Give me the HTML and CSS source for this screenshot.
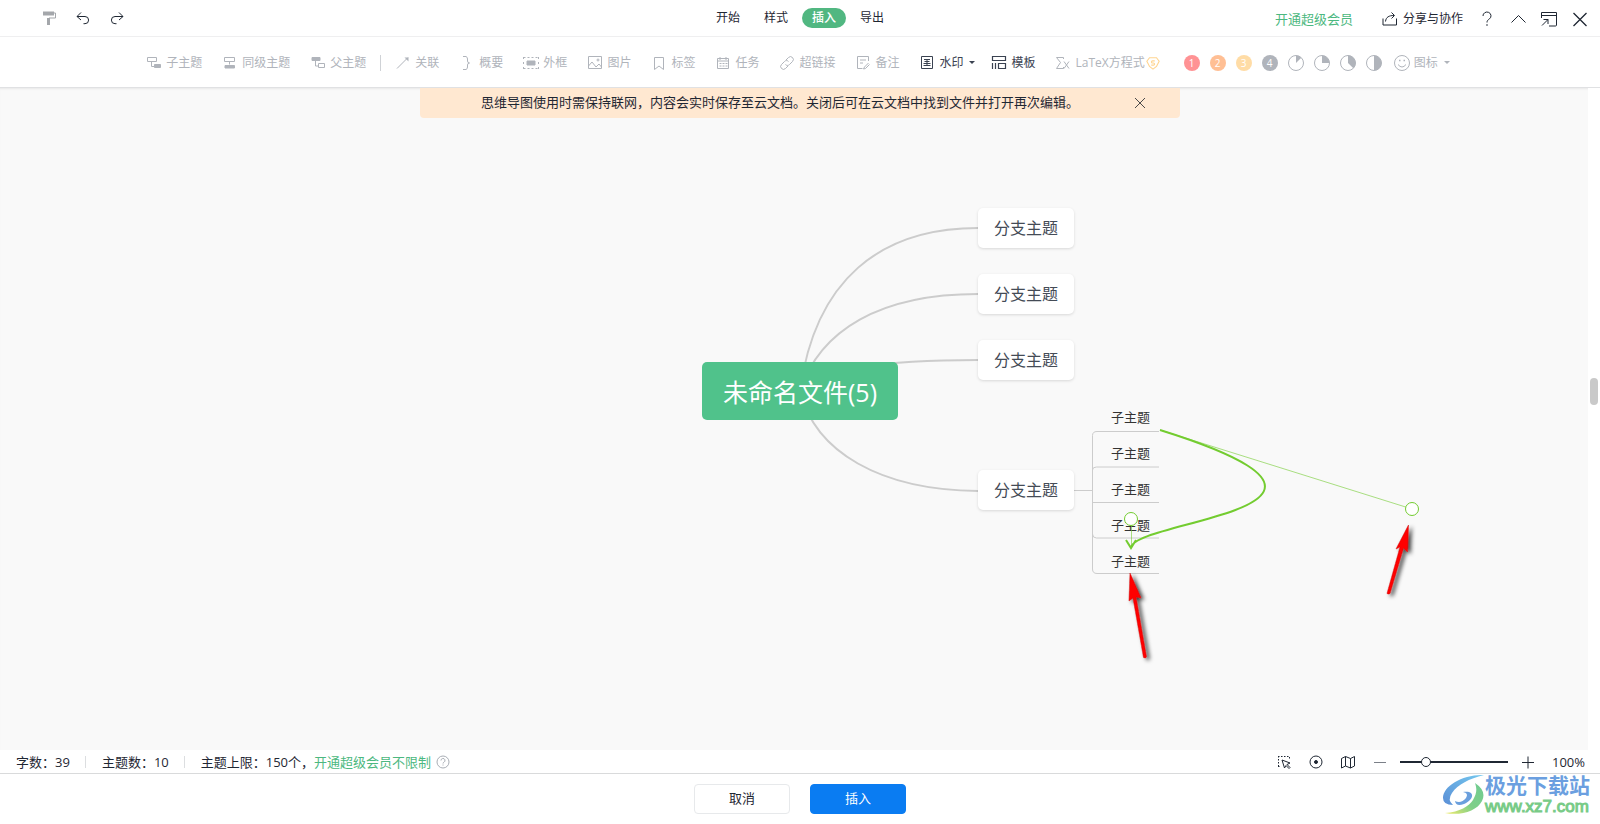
FILE: index.html
```html
<!DOCTYPE html>
<html lang="zh-CN">
<head>
<meta charset="utf-8">
<meta name="viewport" content="width=device-width, initial-scale=1">
<title>思维导图</title>
<link rel="stylesheet" href="styles.css">
</head>
<body>
<header class="header">
  <div class="history">
    <button class="icon-btn" aria-label="格式刷"><svg class="icon" viewBox="0 0 16 16"><path d="M2 1.500h11v4h-11z" fill="#a4a7ab"/><path d="M13 3h1.500v5H8v7" fill="none" stroke="#a4a7ab"/><path d="M6 8h3v7H6z" fill="#a4a7ab"/></svg></button>
    <button class="icon-btn" aria-label="撤销"><svg class="icon line" viewBox="0 0 16 16"><path d="M6 2.500 2 6.500l4 3.500M2 6.500h8a3.600 3.600 0 0 1 0 7.200H8.500"/></svg></button>
    <button class="icon-btn" aria-label="重做"><svg class="icon line" viewBox="0 0 16 16"><path d="m10 2.500 4 4L10 10M14 6.500H6a3.600 3.600 0 0 0 0 7.200h1.500"/></svg></button>
  </div>
  <nav class="tabs">
    <button class="tab">开始</button>
    <button class="tab">样式</button>
    <button class="tab active">插入</button>
    <button class="tab">导出</button>
  </nav>
  <div class="account">
    <a class="vip" href="#">开通超级会员</a>
    <button class="share"><svg class="icon line" viewBox="0 0 16 16"><path d="M1 7.500V14h13.500V7.500M3.500 10.500C4 6 7 4.500 12 4.500M9.500 1.500l3 3-3 3"/></svg>分享与协作</button>
    <div class="window-tools">
      <button class="icon-btn" aria-label="帮助"><svg class="icon line" viewBox="0 0 16 16"><path d="M4 5a4 3.800 0 1 1 6.500 2.800C9 9 8 9.500 8 11.500"/><path d="M7.400 14h1.200" stroke-width="1.500"/></svg></button>
      <button class="icon-btn" aria-label="收起"><svg class="icon line" viewBox="0 0 16 16"><path d="m1.500 11.500 7-7 7 7"/></svg></button>
      <button class="icon-btn" aria-label="还原窗口"><svg class="icon line" viewBox="0 0 16 16"><path d="M.5 7V1.500h15V14a1 1 0 0 1-1 1H8M.5 4.500h15M1 14.500l6-6M2.500 8.500H7V13"/></svg></button>
      <button class="icon-btn" aria-label="关闭"><svg class="icon line" viewBox="0 0 16 16"><path d="m1.500 2 13 13M14.500 2l-13 13" stroke-width="1.300"/></svg></button>
    </div>
  </div>
</header>

<div class="toolbar" role="toolbar">
  <button class="tool"><svg class="icon line" viewBox="0 0 16 16"><path d="M1.500 2.500h9v4h-9zM5.500 6.500v5H9"/><path d="M8.500 9.500h6v3h-6z" fill="currentColor"/></svg>子主题</button>
  <button class="tool"><svg class="icon line" viewBox="0 0 16 16"><path d="M2.500 2.500h10v4h-10zM7.500 6.500v3"/><path d="M3 10.500h9.500v2.500H3z" fill="currentColor"/></svg>同级主题</button>
  <button class="tool"><svg class="icon line" viewBox="0 0 16 16"><path d="M2 2.500h8v3H2z" fill="currentColor"/><path d="M5.500 6v5H8M8.500 8.500h6v4h-6z"/></svg>父主题</button>
  <span class="divider"></span>
  <button class="tool"><svg class="icon line" viewBox="0 0 16 16"><path d="M2 13.500 13 2.500"/><path d="M9.500 2.500h4v4z" fill="currentColor" stroke="none"/></svg>关联</button>
  <button class="tool"><svg class="icon line" viewBox="0 0 16 16"><path d="M4 1.500h3Q8.500 2 8.500 4v2q0 2 2 2-2 0-2 2v2q0 2-1.500 2.500H4"/></svg>概要</button>
  <button class="tool"><svg class="icon line" viewBox="0 0 16 16"><path d="M.5 2v12M15.500 2v12" stroke-dasharray="2 3"/><path d="M.5 2.500h15M.5 13.500h15" stroke-dasharray="2 2"/><path d="M4 6h8v4H4z" fill="currentColor"/></svg>外框</button>
  <button class="tool"><svg class="icon line" viewBox="0 0 16 16"><path d="M1.500 1.500h13v12h-13zM1.500 11 5 7l4 5 3-3 2.500 3"/><circle cx="11" cy="5" r="1"/></svg>图片</button>
  <button class="tool"><svg class="icon line" viewBox="0 0 16 16"><path d="M3.500 2.500h9v12L8 11l-4.500 3.500z"/></svg>标签</button>
  <button class="tool"><svg class="icon line" viewBox="0 0 16 16"><path d="M2.500 3.500h11v10h-11zM5 2v3M11 2v3M2.500 6h11"/><path d="M4.500 8.500h8M4.500 11h8" stroke-dasharray="2 1"/></svg>任务</button>
  <button class="tool"><svg class="icon line" viewBox="0 0 16 16"><path d="m7 5 2.500-2.500a2.800 2.800 0 0 1 4 4L10.500 9.500a2.600 2.600 0 0 1-4 0M9 11l-2.500 2.500a2.800 2.800 0 0 1-4-4L5.500 6.500a2.600 2.600 0 0 1 4 0"/></svg>超链接</button>
  <button class="tool"><svg class="icon line" viewBox="0 0 16 16"><path d="M13.500 6V1.500h-11v12h5M5 5h6M5 8h3M13.500 8l-4 4-1 2 2-.5 4-4"/></svg>备注</button>
  <button class="tool enabled"><svg class="icon line" viewBox="0 0 16 16"><path d="M2.500 1.500h11v12h-11z"/><path d="M5 4.500h6M4.500 10.500h7M5.500 6.500h5M4.500 8.500h7M8 4v7"/></svg>水印<span class="caret"></span></button>
  <button class="tool enabled"><svg class="icon line" viewBox="0 0 16 16"><path d="M1.500 1.500h13v4h-13zM1.500 8v6M4.500 8v6M7.500 8.500h7v5h-7z" stroke-width="1.200"/></svg>模板</button>
  <button class="tool latex"><svg class="icon line" viewBox="0 0 16 16"><path d="M8.500 4V2.500h-7l4 5-4 6h7V12M9 6.500l5 7M14 6.500l-5 7"/></svg><span>LaTeX方程式</span><svg class="badge" viewBox="0 0 16 16"><path d="M4 2h8l3 4-3 6-4 3-4-3-3-6z"/><path d="M10 5.500H7.500a1.200 1.200 0 0 0 0 2.500h1a1.200 1.200 0 0 1 0 2.500H6"/></svg></button>
  <div class="markers">
    <button class="marker m1">1</button>
    <button class="marker m2">2</button>
    <button class="marker m3">3</button>
    <button class="marker m4">4</button>
    <button class="marker" aria-label="进度一"><svg class="icon line" viewBox="0 0 16 16"><circle cx="8" cy="8" r="7.500"/><path d="M8 8V.5a7.500 7.500 0 0 1 5.300 2.200z" fill="currentColor" stroke="none"/></svg></button>
    <button class="marker" aria-label="进度二"><svg class="icon line" viewBox="0 0 16 16"><circle cx="8" cy="8" r="7.500"/><path d="M8 8V.5A7.500 7.500 0 0 1 15.500 8z" fill="currentColor" stroke="none"/></svg></button>
    <button class="marker" aria-label="进度三"><svg class="icon line" viewBox="0 0 16 16"><circle cx="8" cy="8" r="7.500"/><path d="M8 8V.5a7.500 7.500 0 0 1 5.300 12.800z" fill="currentColor" stroke="none"/></svg></button>
    <button class="marker" aria-label="进度四"><svg class="icon line" viewBox="0 0 16 16"><circle cx="8" cy="8" r="7.500"/><path d="M8 .5a7.500 7.500 0 0 1 0 15z" fill="currentColor" stroke="none"/></svg></button>
  </div>
  <button class="tool smile"><svg class="icon line" viewBox="0 0 16 16"><circle cx="8" cy="8" r="7.500"/><path d="M4 9.500q4 5 8 0"/><path d="M5 5.500h1.500M9.500 5.500H11" stroke-width="1.500"/></svg>图标<span class="caret"></span></button>
</div>

<main class="canvas">
  <div class="notice">
    <p class="notice-text">思维导图使用时需保持联网，内容会实时保存至云文档。关闭后可在云文档中找到文件并打开再次编辑。</p>
    <button class="notice-close" aria-label="关闭提示"><svg viewBox="0 0 12 12"><path d="m1 1 10 10M11 1 1 11"/></svg></button>
  </div>

  <div class="map">
    <svg class="layer" viewBox="700 88 740 600">
      <g fill="none" stroke="#ccc" stroke-width="2">
        <path d="M800 391C815 280 880 228 978 228"/>
        <path d="M800 391C820 330 880 294 978 294"/>
        <path d="M800 391C830 368 880 360 978 360"/>
        <path d="M800 391C815 452 880 490 978 491"/>
      </g>
      <g fill="none" stroke="#ccc">
        <path d="M1074 490.500h18.500M1159 431.500h-62q-4.500 0-4.500 4v133.500q0 4.500 4.500 4.500h62"/>
        <path d="M1092.500 470q0-3 4-3h62.500M1092.500 502.500h66.500M1092.500 534q0 4 4 4h62.500"/>
      </g>
    </svg>
    <div class="node root">未命名文件(5)</div>
    <div class="node branch b1">分支主题</div>
    <div class="node branch b2">分支主题</div>
    <div class="node branch b3">分支主题</div>
    <div class="node branch b4">分支主题</div>
    <ul class="leaves">
      <li>子主题</li>
      <li>子主题</li>
      <li>子主题</li>
      <li>子主题</li>
      <li>子主题</li>
    </ul>
    <svg class="layer" viewBox="700 88 740 600">
      <defs>
        <filter id="shade" x="-60%" y="-20%" width="260%" height="150%"><feDropShadow dx="3" dy="2" stdDeviation="2" flood-color="#000" flood-opacity=".75"/></filter>
      </defs>
      <g fill="none" stroke="#73cc30">
        <path d="M1160 430 1412 509M1131.500 519v28" stroke-opacity=".6"/>
        <path d="M1160 430C1412 509 1131 520 1131 548M1126 540l5 8 5-8" stroke-width="2"/>
        <circle cx="1131" cy="519" r="6.500" fill="#fff"/>
        <circle cx="1412" cy="509" r="6.500" fill="#fff"/>
      </g>
      <g fill="#f00" stroke="#d01010" stroke-width=".5" filter="url(#shade)">
        <path d="m1130 573 11 25-5-1 10.500 60q-1 1.500-3 .5L1133 598l-4 3z"/>
      </g>
      <g fill="#f00" stroke="#d01010" stroke-width=".5" filter="url(#shade)">
        <path d="m1408.500 525-1 27-4-4-13.500 45.500q-1.500 1-3 0L1400 547l-4 2z"/>
      </g>
    </svg>
  </div>
  <div class="scrollbar"><span class="scroll-thumb"></span></div>
</main>

<section class="status">
  <span class="stat">字数：39</span>
  <span class="stat">主题数：10</span>
  <span class="stat">主题上限：150个，<a class="vip" href="#">开通超级会员不限制</a></span>
  <svg class="hint" viewBox="0 0 14 14"><circle cx="7" cy="7" r="6"/><path d="M5 5.500A2 2 0 1 1 8 7.200Q7 7.700 7 8.500M7 9.500v1"/></svg>
  <div class="view-tools">
    <button class="icon-btn" aria-label="框选"><svg class="icon line" viewBox="0 0 16 16"><path d="M2 2.500h11M2.500 2v11M13.500 3v2M2 12.500h3" stroke-dasharray="1.500 1.500"/><path d="m6 6 8 3-3 1.500 3 3-1 1-3-3L8.500 14z"/></svg></button>
    <button class="icon-btn" aria-label="定位中心"><svg class="icon line" viewBox="0 0 16 16"><circle cx="8" cy="8" r="6"/><circle cx="8" cy="8" r="1.500" fill="currentColor"/></svg></button>
    <button class="icon-btn" aria-label="导航图"><svg class="icon line" viewBox="0 0 16 16"><path d="M1.500 4.500 5.500 2.500l5 2 4-2v9.500l-4 2-5-2-4 2zM5.500 2.500V12M10.500 4.500V14"/></svg></button>
    <button class="icon-btn minus" aria-label="缩小"><svg class="icon line" viewBox="0 0 16 16"><path d="M2 8.500h12"/></svg></button>
    <input class="zoom" type="range" min="0" max="100" value="21" aria-label="缩放">
    <button class="icon-btn" aria-label="放大"><svg class="icon line" viewBox="0 0 16 16"><path d="M2 8.500h12M8 2.500v12"/></svg></button>
    <span class="percent">100%</span>
  </div>
</section>

<footer class="footer">
  <button class="btn">取消</button>
  <button class="btn primary">插入</button>
  <div class="brand">
    <svg class="brand-mark" viewBox="0 0 42 42">
      <defs>
        <linearGradient id="blue" x1="0" y1="1" x2="1" y2="0"><stop offset="0" stop-color="#5b8fd6"/><stop offset="1" stop-color="#74c8ef"/></linearGradient>
        <linearGradient id="green" x1="0" y1="1" x2="1" y2="0"><stop offset="0" stop-color="#f3ec6c"/><stop offset=".45" stop-color="#7fcf88"/><stop offset="1" stop-color="#6fcb92"/></linearGradient>
      </defs>
      <path d="M41 1C20 0 0 12 0 24q0 7 10 7Q4 26 9 19C15 10 26 5 41 1z" fill="url(#blue)"/>
      <path d="M12 27Q13 33 21 30C32 25 32 16 20 18q6 1 3 6-5 6-11 3z" fill="#6a9fdd"/>
      <path d="M32 9q12 8 7 18C34 37 18 42 2 39c15-1 24-7 28-13 4-7 4-11 2-17z" fill="url(#green)"/>
    </svg>
    <div class="brand-text"><span class="brand-name">极光下载站</span><span class="brand-url">www.xz7.com</span></div>
  </div>
</footer>
</body>
</html>
```

FILE: styles.css
```css
* { box-sizing: border-box; }

body {
  margin: 0;
  min-height: 100vh;
  display: flex;
  flex-direction: column;
  background: #fff;
  color: #1f2733;
  font: 12px/20px "Open Sans", "Noto Sans CJK SC", sans-serif;
}

button {
  margin: 0;
  padding: 0;
  border: 0;
  background: none;
  color: inherit;
  font: inherit;
  white-space: nowrap;
}

a { color: inherit; text-decoration: none; }

.icon { display: block; width: 16px; height: 16px; flex: none; }
.line { fill: none; stroke: currentColor; stroke-width: 1; }
.icon-btn { display: flex; }

/* Header */
.header {
  display: grid;
  grid-template-columns: 1fr auto 1fr;
  align-items: center;
  height: 37px;
  border-bottom: 1px solid #efeff0;
}
.history { display: flex; gap: 18px; padding-left: 41px; }
.tabs { display: flex; gap: 4px; }
.tab { height: 20px; padding: 0 10px; border-radius: 10px; }
.tab.active { background: #51b781; color: #fff; font-weight: 500; }
.account {
  display: flex;
  align-items: center;
  justify-content: flex-end;
  padding: 2px 12px 0 0;
}
.vip { color: #4cb880; font-size: 13px; }
.share { display: flex; align-items: center; gap: 5px; margin: 0 16px 0 29px; }
.window-tools { display: flex; gap: 15px; }

/* Toolbar */
.toolbar {
  display: flex;
  align-items: center;
  justify-content: center;
  gap: 20px;
  height: 51px;
  padding: 1px 8px 0 0;
  border-bottom: 1px solid #e0e1e3;
  color: #b0b4bb;
}
.tool { display: flex; align-items: center; gap: 4px; }
.tool.enabled { color: #3a4251; }
.caret {
  margin: 0 -4px 0 2px;
  border: 3px solid transparent;
  border-top-color: currentColor;
  border-bottom: 0;
}
.divider { width: 1px; height: 16px; margin: 0 -6px; background: #cfd2d6; }
.latex span { margin-right: -3px; }
.badge { width: 14px; height: 14px; fill: none; stroke: #ffd591; stroke-width: 1.3; }
.markers { display: flex; gap: 10px; margin-left: 4px; }
.marker {
  width: 16px;
  height: 16px;
  border-radius: 50%;
  font-size: 10px;
  line-height: 16px;
  text-align: center;
}
.m1, .m2, .m3, .m4 { color: #fff; }
.m1 { background: #ff9294; }
.m2 { background: #ffbf94; }
.m3 { background: #ffdca6; }
.m4 { background: #b0b4bb; }
.smile { margin-left: -8px; }

/* Canvas */
.canvas {
  position: relative;
  flex: 1;
  min-height: 620px;
  overflow: hidden;
  background: #f9f9f9;
  box-shadow: inset 0 2px 2px -1px #e8e8e8;
}
.notice {
  display: flex;
  align-items: center;
  justify-content: center;
  position: relative;
  max-width: 760px;
  min-height: 30px;
  margin: 0 auto;
  border-radius: 0 0 4px 4px;
  background: #ffe8d1;
  font-size: 13px;
}
.notice-text { margin: 0 40px 2px 0; }
.notice-close { position: absolute; right: 34px; display: flex; }
.notice-close svg { width: 12px; height: 12px; fill: none; stroke: #4b4a4a; }

.map {
  position: absolute;
  top: 0;
  left: 50%;
  width: 740px;
  height: 600px;
  margin-left: -100px;
}
.layer { position: absolute; inset: 0; width: 100%; height: 100%; }
.node {
  position: absolute;
  display: flex;
  align-items: center;
  justify-content: center;
  white-space: nowrap;
}
.root {
  left: 2px;
  top: 274px;
  width: 196px;
  height: 58px;
  padding-top: 2px;
  border-radius: 5px;
  background: #50c28b;
  color: #fff;
  font-size: 25px;
}
.branch {
  left: 278px;
  width: 96px;
  height: 40px;
  border-radius: 5px;
  background: #fff;
  box-shadow: 0 1px 3px #0002;
  color: #444b56;
  font-size: 16px;
}
.b1 { top: 120px; }
.b2 { top: 186px; }
.b3 { top: 252px; }
.b4 { top: 382px; }
.leaves {
  position: absolute;
  left: 411px;
  top: 319px;
  display: grid;
  gap: 16px;
  margin: 0;
  padding: 0;
  list-style: none;
  color: #333;
  font-size: 13px;
}
.scrollbar {
  position: absolute;
  top: 0;
  right: 0;
  bottom: 0;
  width: 12px;
  padding: 0 2px;
  background: #fff;
  display: flex;
  flex-direction: column;
  justify-content: center;
}
.scroll-thumb { height: 27px; margin-bottom: 56px; border-radius: 4px; background: #c9c9c9; }

/* Status bar */
.status {
  display: flex;
  align-items: center;
  height: 24px;
  padding: 1px 15px 0 16px;
  border-bottom: 1px solid #d9dadb;
  font-size: 13px;
}
.stat + .stat { display: flex; align-items: center; }
.stat + .stat::before { content: ""; width: 1px; height: 12px; margin: 0 16px 0 15px; background: #dcdee0; }
.hint { width: 14px; height: 14px; margin-left: 5px; fill: none; stroke: #a9aeb5; }
.view-tools { display: flex; align-items: center; gap: 16px; margin-left: auto; }
.minus { color: #7b8088; }
.zoom {
  appearance: none;
  width: 108px;
  height: 12px;
  margin: 0 -4px;
  background: linear-gradient(#1f2733, #1f2733) center / 100% 2px no-repeat;
}
.zoom::-webkit-slider-thumb {
  appearance: none;
  width: 10px;
  height: 10px;
  border: 1px solid #1f2733;
  border-radius: 50%;
  background: #fff;
}

/* Footer */
.footer {
  position: relative;
  display: flex;
  justify-content: center;
  gap: 20px;
  height: 50px;
  padding-top: 10px;
}
.btn {
  width: 96px;
  height: 30px;
  padding-bottom: 2px;
  border: 1px solid #e7e9eb;
  border-radius: 4px;
  font-size: 13px;
}
.btn.primary { border-color: #0a7cf2; background: #0a7cf2; color: #fff; }
.brand { position: absolute; right: 10px; top: 0; display: flex; align-items: flex-start; }
.brand-mark { width: 42px; height: 42px; }
.brand-text { display: flex; flex-direction: column; }
.brand-name { color: #6b9fe0; font-size: 21px; line-height: 22px; font-weight: 700; }
.brand-url { color: #78cb87; font: 17px/22px "Liberation Sans", sans-serif; -webkit-text-stroke: 1px #78cb87; }
```
